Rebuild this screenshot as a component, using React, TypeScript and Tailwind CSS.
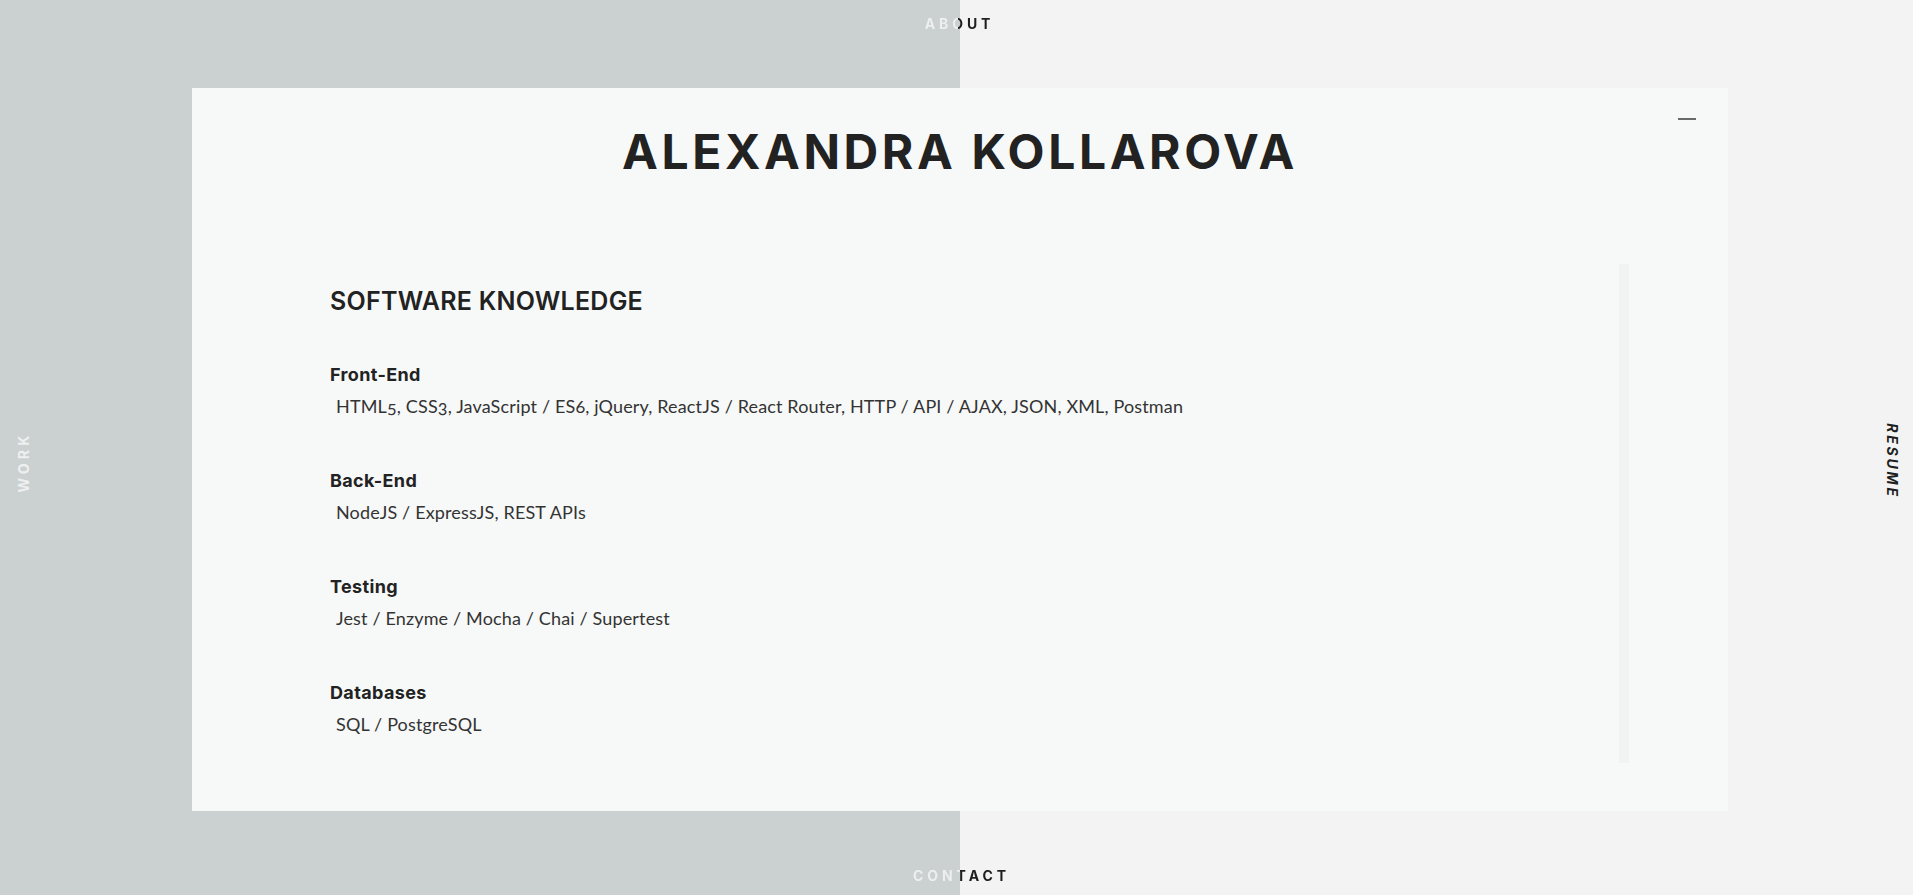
import React from 'react';

const skills = [
  { title: 'Front-End', items: 'HTML5, CSS3, JavaScript / ES6, jQuery, ReactJS / React Router, HTTP / API / AJAX, JSON, XML, Postman' },
  { title: 'Back-End', items: 'NodeJS / ExpressJS, REST APIs' },
  { title: 'Testing', items: 'Jest / Enzyme / Mocha / Chai / Supertest' },
  { title: 'Databases', items: 'SQL / PostgreSQL' },
];

const heading = "font-['Inter','Liberation_Sans',sans-serif]";
const body = "font-['Lato','Open_Sans',sans-serif]";

const App: React.FC = () => {
  return (
    <div className="relative h-[895px] w-full overflow-hidden bg-[linear-gradient(to_right,#cbd1d0_960px,#f2f3f2_960px)]">
      {/* Top nav */}
      <div className="h-[88px] pt-[16px]">
        <div className={`${heading} w-full pl-[6px] text-center text-[14px] leading-4 font-bold tracking-[0.28em] bg-[linear-gradient(to_right,#eef0ef_958px,#1f1f1f_958px)] bg-clip-text text-transparent`}>
          ABOUT
        </div>
      </div>

      {/* Card */}
      <div className="relative ml-[192px] h-[723px] w-[1536px] bg-[#f7f9f8]">
        <button className="absolute right-[32px] top-[30px] h-[2px] w-[18px] bg-[#6a6a6a]" />

        <h1 className={`${heading} pt-[40px] text-center text-[48px] leading-none font-bold tracking-[0.075em] text-[#222]`}>
          ALEXANDRA KOLLAROVA
        </h1>

        <div className="ml-[100px] mt-[88px] flex h-[499px] w-[1337px]">
          <div className="flex-1 pl-[38px] pt-[25px] text-[#222]">
            <h2 className={`${heading} text-[25px] leading-none font-semibold tracking-[0.01em]`}>SOFTWARE KNOWLEDGE</h2>

            <div className="mt-[52px]">
              {skills.map((s, i) => (
                <div key={s.title} className={i > 0 ? 'mt-[57px]' : ''}>
                  <h3 className={`${heading} text-[18px] leading-none font-bold tracking-[0.02em]`}>{s.title}</h3>
                  <p className={`${body} mt-[13px] pl-[6px] text-[18px] leading-none font-normal tracking-[0.15px] text-[#333] oldstyle-nums`}>
                    {s.items}
                  </p>
                </div>
              ))}
            </div>
          </div>
          {/* scrollbar track */}
          <div className="w-[10px] bg-[#f1f2f2]" />
        </div>
      </div>

      {/* Bottom nav */}
      <div className="pt-[57px]">
        <div className={`${heading} w-full pl-[10px] text-center text-[14px] leading-4 font-bold tracking-[0.28em] bg-[linear-gradient(to_right,#eef0ef_960px,#1f1f1f_960px)] bg-clip-text text-transparent`}>
          CONTACT
        </div>
      </div>

      {/* Side nav */}
      <div className={`${heading} absolute left-[24px] top-[462px] -translate-x-1/2 -translate-y-1/2 -rotate-90 text-[14px] leading-4 font-bold tracking-[0.3em] text-[#eef0ef]`}>
        WORK
      </div>
      <div className={`${heading} absolute left-[1892px] top-[461px] -translate-x-1/2 -translate-y-1/2 rotate-90 text-[14px] leading-4 font-bold italic tracking-[0.2em] text-[#1f1f1f]`}>
        RESUME
      </div>
    </div>
  );
};

export default App;
